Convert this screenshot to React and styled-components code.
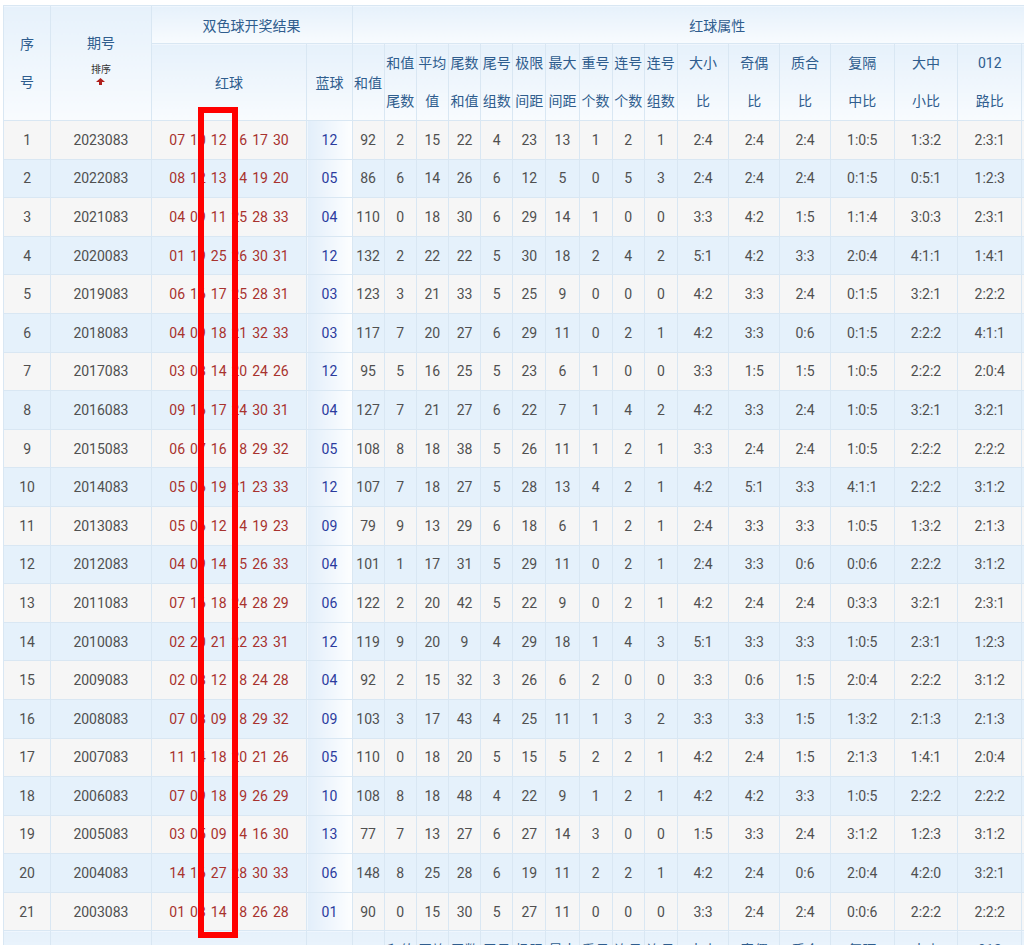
import React from "react";
import styled, { createGlobalStyle } from "styled-components";

const G = createGlobalStyle`
  html,body{margin:0;padding:0;background:#fff;overflow:hidden;}
  body{font-family:Roboto,"Noto Sans CJK SC",sans-serif;}
`;
const Page = styled.div`position:relative;width:1024px;height:945px;overflow:hidden;padding:5px 0 0 3px;box-sizing:border-box;`;
const Table = styled.table`
  border-collapse:collapse;table-layout:fixed;width:1080px;font-size:14px;
  td,th{border:1px solid #d9e7f3;text-align:center;padding:0;white-space:nowrap;overflow:hidden;}
`;
const Th = styled.th`
  font-weight:normal;color:#2f5d8e;background:linear-gradient(#e6f1fb,#f8fbfe);
  height:${p => p.$h || 37}px;line-height:${p => p.$lh || "normal"};
`;
const Row = styled.tr`
  height:38.6px;background:${p => (p.$odd ? "#f6f6f6" : "#e5f1fb")};
  td{color:#505050;}
`;
const Red = styled.td`color:#a8322e !important;word-spacing:1.5px;`;
const Blue = styled.td`color:#2b3b9e !important;background:linear-gradient(to right,#e2eefa,#fdfeff);`;
const Mark = styled.div`position:absolute;left:198px;top:107px;width:40px;height:831px;border:6px solid #f00;box-sizing:border-box;`;
const Title = styled.div`margin-top:-6px;`;
const Sort = styled.div`font-size:10px;color:#333;line-height:12px;margin-top:12px;`;

const rows = `1 2023083 07 10 12 16 17 30|12|92 2 15 22 4 23 13 1 2 1 2:4 2:4 2:4 1:0:5 1:3:2 2:3:1
2 2022083 08 12 13 14 19 20|05|86 6 14 26 6 12 5 0 5 3 2:4 2:4 2:4 0:1:5 0:5:1 1:2:3
3 2021083 04 09 11 25 28 33|04|110 0 18 30 6 29 14 1 0 0 3:3 4:2 1:5 1:1:4 3:0:3 2:3:1
4 2020083 01 19 25 26 30 31|12|132 2 22 22 5 30 18 2 4 2 5:1 4:2 3:3 2:0:4 4:1:1 1:4:1
5 2019083 06 16 17 25 28 31|03|123 3 21 33 5 25 9 0 0 0 4:2 3:3 2:4 0:1:5 3:2:1 2:2:2
6 2018083 04 09 18 21 32 33|03|117 7 20 27 6 29 11 0 2 1 4:2 3:3 0:6 0:1:5 2:2:2 4:1:1
7 2017083 03 08 14 20 24 26|12|95 5 16 25 5 23 6 1 0 0 3:3 1:5 1:5 1:0:5 2:2:2 2:0:4
8 2016083 09 16 17 24 30 31|04|127 7 21 27 6 22 7 1 4 2 4:2 3:3 2:4 1:0:5 3:2:1 3:2:1
9 2015083 06 07 16 18 29 32|05|108 8 18 38 5 26 11 1 2 1 3:3 2:4 2:4 1:0:5 2:2:2 2:2:2
10 2014083 05 06 19 21 23 33|12|107 7 18 27 5 28 13 4 2 1 4:2 5:1 3:3 4:1:1 2:2:2 3:1:2
11 2013083 05 06 12 14 19 23|09|79 9 13 29 6 18 6 1 2 1 2:4 3:3 3:3 1:0:5 1:3:2 2:1:3
12 2012083 04 09 14 15 26 33|04|101 1 17 31 5 29 11 0 2 1 2:4 3:3 0:6 0:0:6 2:2:2 3:1:2
13 2011083 07 16 18 24 28 29|06|122 2 20 42 5 22 9 0 2 1 4:2 2:4 2:4 0:3:3 3:2:1 2:3:1
14 2010083 02 20 21 22 23 31|12|119 9 20 9 4 29 18 1 4 3 5:1 3:3 3:3 1:0:5 2:3:1 1:2:3
15 2009083 02 08 12 18 24 28|04|92 2 15 32 3 26 6 2 0 0 3:3 0:6 1:5 2:0:4 2:2:2 3:1:2
16 2008083 07 08 09 18 29 32|09|103 3 17 43 4 25 11 1 3 2 3:3 3:3 1:5 1:3:2 2:1:3 2:1:3
17 2007083 11 14 18 20 21 26|05|110 0 18 20 5 15 5 2 2 1 4:2 2:4 1:5 2:1:3 1:4:1 2:0:4
18 2006083 07 09 18 19 26 29|10|108 8 18 48 4 22 9 1 2 1 4:2 4:2 3:3 1:0:5 2:2:2 2:2:2
19 2005083 03 05 09 14 16 30|13|77 7 13 27 6 27 14 3 0 0 1:5 3:3 2:4 3:1:2 1:2:3 3:1:2
20 2004083 14 16 27 28 30 33|06|148 8 25 28 6 19 11 2 2 1 4:2 2:4 0:6 2:0:4 4:2:0 3:2:1
21 2003083 01 03 14 18 26 28|01|90 0 15 30 5 27 11 0 0 0 3:3 2:4 2:4 0:0:6 2:2:2 2:2:2`.split("\n").map(l => {
  const [a, b, c] = l.split("|");
  const p = a.split(" ");
  return { n: p[0], q: p[1], red: p.slice(2).join(" "), blue: b, attrs: c.split(" ") };
});

const widths = [47, 100, 155, 45, 32, 32, 32, 32, 32, 33, 33, 33, 32, 33, 51, 51, 50, 64, 63, 64, 60];
const two = [["和值", "尾数"], ["平均", "值"], ["尾数", "和值"], ["尾号", "组数"], ["极限", "间距"], ["最大", "间距"], ["重号", "个数"], ["连号", "个数"], ["连号", "组数"], ["大小", "比"], ["奇偶", "比"], ["质合", "比"], ["复隔", "中比"], ["大中", "小比"], ["012", "路比"]];

const Two = ({ t }) => <Th $h={76} $lh="38px">{t[0]}<br />{t[1]}</Th>;

export default function App() {
  return (
    <Page>
      <G />
      <Table>
        <colgroup>{widths.map((w, i) => <col key={i} style={{ width: w }} />)}</colgroup>
        <thead>
          <tr>
            <Th rowSpan={2} $lh="38px">序<br />号</Th>
            <Th rowSpan={2}><Title>期号</Title><Sort>排序<br /><svg width="9" height="7" viewBox="0 0 9 7"><path d="M4.5 0L9 4H6V7H3V4H0Z" fill="#b0201c" /></svg></Sort></Th>
            <Th colSpan={2}>双色球开奖结果</Th>
            <Th colSpan={17}>红球属性</Th>
          </tr>
          <tr>
            <Th $h={76}>红球</Th>
            <Th $h={76}>蓝球</Th>
            <Th $h={76}>和值</Th>
            {two.map((t, i) => <Two key={i} t={t} />)}
            <Th $h={76}></Th>
          </tr>
        </thead>
        <tbody>
          {rows.map((r, i) => (
            <Row key={i} $odd={i % 2 === 0}>
              <td>{r.n}</td><td>{r.q}</td><Red>{r.red}</Red><Blue>{r.blue}</Blue>
              {r.attrs.map((v, j) => <td key={j}>{v}</td>)}
              <td></td>
            </Row>
          ))}
          <tr>
            <Th></Th><Th></Th><Th></Th><Th></Th><Th $h={76}></Th>
            {two.map((t, i) => <Two key={i} t={t} />)}
            <Th></Th>
          </tr>
        </tbody>
      </Table>
      <Mark />
    </Page>
  );
}
